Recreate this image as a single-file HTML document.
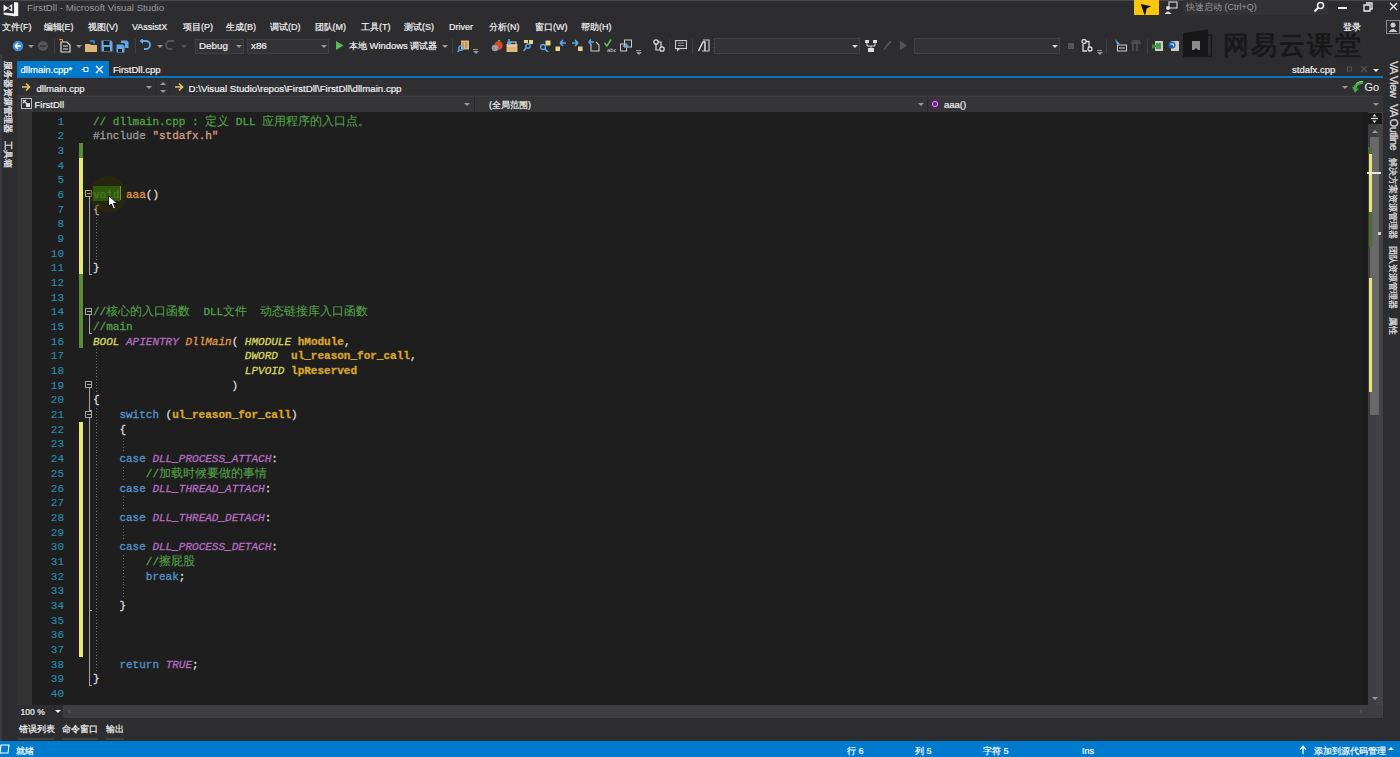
<!DOCTYPE html>
<html><head><meta charset="utf-8">
<style>
*{margin:0;padding:0;box-sizing:border-box}
html,body{width:1400px;height:757px;overflow:hidden;background:#2d2d30;font-family:"Liberation Sans",sans-serif;color:#f1f1f1}
.a{position:absolute;white-space:nowrap}
.mi{font-size:9px;line-height:12px;color:#f1f1f1;-webkit-text-stroke:0.2px currentColor}
.tab{font-size:9.5px;line-height:12px;color:#f1f1f1;-webkit-text-stroke:0.2px currentColor}
.nav{font-size:9.5px;line-height:12px;color:#f1f1f1;-webkit-text-stroke:0.2px currentColor}
.st{font-size:9px;line-height:12px;color:#fff;-webkit-text-stroke:0.2px currentColor}
.code{font-family:"Liberation Mono",monospace;font-size:11px;letter-spacing:0px;-webkit-text-stroke:0.3px currentColor;line-height:14.68px;color:#dcdcdc}
.ln{color:#2a8cab;-webkit-text-stroke:0.15px currentColor;text-align:right;width:40px;left:24px}
.cm{color:#53a047}
.pp{color:#9b9b9b}
.str{color:#d69d85}
.kw{color:#5592cc}
.ty{color:#d8d860;font-style:italic}
.mac{color:#b46cc0;font-style:italic}
.fn{color:#e0964a;font-style:italic}
.pa{color:#d9a530;font-weight:bold}
.fn2{color:#e39a3f}
.zh{font-size:11.6px;letter-spacing:0;-webkit-text-stroke:0.1px currentColor}
.cb{position:absolute;border:1px solid #3f3f46;background:#333337}
.dd{position:absolute;width:0;height:0;border-left:3px solid transparent;border-right:3px solid transparent;border-top:3px solid #999}
.vt{position:absolute;transform-origin:0 0;transform:rotate(90deg);white-space:nowrap;font-size:9px;line-height:10px;color:#d8d8d8;-webkit-text-stroke:0.3px currentColor}
.dg{position:absolute;width:1px;background:repeating-linear-gradient(to bottom,#6e6e6e 0,#6e6e6e 1px,transparent 1px,transparent 3px)}

</style></head><body>
<div class="a" style="left:0;top:0;width:1400px;height:1px;background:#48484c"></div>
<svg class="a" style="left:0;top:0" width="20" height="18" viewBox="0 0 20 18"><path d="M14 2 L18.2 2.6 V16 L14 16.2 Z" fill="#f4f4f4"/><path d="M3.6 12.4 L14.5 13.6 V16.2 L3.6 14.8 Z" fill="#f4f4f4"/><path d="M3.6 4.6 L7.6 7.4 L12.2 4 V11.8 L7.6 8.6 L3.6 11.4 Z" fill="#f4f4f4"/><circle cx="9.8" cy="7.9" r="1.3" fill="#2d2d30"/></svg>
<div class="a" style="left:27px;top:2.3px;font-size:9.7px;line-height:12px;color:#999">FirstDll - Microsoft Visual Studio</div>
<div class="a" style="left:1134px;top:0;width:25px;height:15px;background:#f9c60f"></div>
<svg class="a" style="left:1139px;top:1px" width="14" height="14" viewBox="0 0 12 12"><path d="M1.5 2.5 L10.5 4.5 L6.5 6.5 L5.5 11.5 L4.5 11.5 Z" fill="#111"/></svg>
<svg class="a" style="left:1164px;top:1px" width="14" height="13" viewBox="0 0 14 13"><rect x="5" y="1" width="8" height="6" fill="none" stroke="#ccc" stroke-width="1.2"/><circle cx="4" cy="7" r="2" fill="#ddd"/><path d="M0.5 13 Q4 8 7.5 13Z" fill="#ddd"/></svg>
<div class="a" style="left:1183px;top:0;width:145px;height:15px;background:#333337"></div>
<div class="a" style="left:1186px;top:1px;font-size:9px;line-height:12px;color:#999">快速启动 (Ctrl+Q)</div>
<svg class="a" style="left:1313px;top:1px" width="12" height="12" viewBox="0 0 12 12"><circle cx="7.5" cy="4.5" r="3" fill="none" stroke="#eee" stroke-width="1.5"/><path d="M5.5 6.5 L1.5 10.5" stroke="#eee" stroke-width="2"/></svg>
<div class="a" style="left:1338px;top:7px;width:9px;height:2px;background:#eee"></div>
<svg class="a" style="left:1363px;top:2px" width="10" height="10" viewBox="0 0 10 10"><path d="M3 1 H9 V7 H7 M1 3 H7 V9 H1 Z" fill="none" stroke="#eee" stroke-width="1.3"/></svg>
<svg class="a" style="left:1389px;top:2px" width="9" height="9" viewBox="0 0 9 9"><path d="M1 1 L8 8 M8 1 L1 8" stroke="#eee" stroke-width="1.4"/></svg>
<div class="a mi" style="left:2px;top:21px">文件(F)</div>
<div class="a mi" style="left:43.5px;top:21px">编辑(E)</div>
<div class="a mi" style="left:88px;top:21px">视图(V)</div>
<div class="a mi" style="left:132px;top:21px">VAssistX</div>
<div class="a mi" style="left:183px;top:21px">项目(P)</div>
<div class="a mi" style="left:226px;top:21px">生成(B)</div>
<div class="a mi" style="left:270px;top:21px">调试(D)</div>
<div class="a mi" style="left:314.5px;top:21px">团队(M)</div>
<div class="a mi" style="left:361px;top:21px">工具(T)</div>
<div class="a mi" style="left:404px;top:21px">测试(S)</div>
<div class="a mi" style="left:449px;top:21px">Driver</div>
<div class="a mi" style="left:489px;top:21px">分析(N)</div>
<div class="a mi" style="left:535px;top:21px">窗口(W)</div>
<div class="a mi" style="left:581px;top:21px">帮助(H)</div>
<div class="a mi" style="left:1343px;top:21px">登录</div>
<svg class="a" style="left:1386px;top:20px" width="14" height="14" viewBox="0 0 14 14"><rect x="0.5" y="0.5" width="13" height="13" fill="none" stroke="#888"/><circle cx="7" cy="5" r="2.5" fill="#ccc"/><path d="M2.5 12 Q7 6 11.5 12Z" fill="#ccc"/></svg>
<svg class="a" style="left:12px;top:40px" width="12" height="12" viewBox="0 0 12 12"><circle cx="6" cy="6" r="5.2" fill="#3c8fd6"/><path d="M3 6 L6 3 M3 6 L6 9 M3 6 H9" stroke="#fff" stroke-width="1.5"/></svg>
<div class="dd" style="left:28px;top:45px"></div>
<svg class="a" style="left:37px;top:40px" width="12" height="12" viewBox="0 0 12 12"><circle cx="6" cy="6" r="5" fill="#555"/><path d="M9 6 H3" stroke="#333" stroke-width="1.5"/></svg>
<div class="a" style="left:54px;top:39px;width:1px;height:14px;background:#3f3f46"></div>
<svg class="a" style="left:59px;top:39px" width="13" height="14" viewBox="0 0 13 14"><path d="M2 3 H8 L11 6 V13 H2 Z" fill="none" stroke="#ddd" stroke-width="1.2"/><path d="M4 7 H9 M4 10 H9" stroke="#ddd"/><path d="M0 1 L3 0 L4 3" stroke="#e8b640" fill="none"/></svg>
<div class="dd" style="left:76px;top:45px"></div>
<svg class="a" style="left:84px;top:40px" width="14" height="13" viewBox="0 0 14 13"><path d="M1 4 H6 L7 5 H13 V12 H1 Z" fill="#dcb67a"/><path d="M6 1 H10 V4" stroke="#3c8fd6" stroke-width="1.5" fill="none"/></svg>
<svg class="a" style="left:101px;top:40px" width="12" height="12" viewBox="0 0 12 12"><path d="M0.5 0.5 H10 L11.5 2 V11.5 H0.5 Z" fill="#62a8e8"/><rect x="2.5" y="1" width="6" height="4" fill="#1e1e1e"/><rect x="3" y="7" width="6" height="4" fill="#1e1e1e"/></svg>
<svg class="a" style="left:116px;top:40px" width="13" height="13" viewBox="0 0 13 13"><path d="M0.5 4.5 H7 L8.5 6 V12.5 H0.5 Z" fill="#62a8e8"/><path d="M5 0.5 H11 L12.5 2 V8 H9 V4 L8 3 H5 Z" fill="#62a8e8"/><rect x="2" y="9" width="4" height="3" fill="#1e1e1e"/></svg>
<div class="a" style="left:135px;top:39px;width:1px;height:14px;background:#3f3f46"></div>
<svg class="a" style="left:139px;top:39px" width="12" height="13" viewBox="0 0 12 13"><path d="M3 2 H7 A4 4 0 0 1 7 10 H5" fill="none" stroke="#62a8e8" stroke-width="1.8"/><path d="M0.5 2 L4 -1 V5 Z" fill="#62a8e8"/></svg>
<div class="dd" style="left:157px;top:45px"></div>
<svg class="a" style="left:165px;top:39px" width="12" height="13" viewBox="0 0 12 13"><path d="M9 2 H5 A4 4 0 0 0 5 10 H7" fill="none" stroke="#555" stroke-width="1.8"/></svg>
<div class="dd" style="left:181px;top:45px;border-top-color:#555"></div>
<div class="cb" style="left:195px;top:39px;width:49px;height:15px"></div>
<div class="a mi" style="left:199px;top:40px;font-size:9.8px">Debug</div>
<div class="dd" style="left:236px;top:45px"></div>
<div class="cb" style="left:247px;top:39px;width:82px;height:15px"></div>
<div class="a mi" style="left:251px;top:40px;font-size:9.8px">x86</div>
<div class="dd" style="left:321px;top:45px"></div>
<svg class="a" style="left:336px;top:41px" width="8" height="9" viewBox="0 0 8 9"><path d="M0 0 L7.5 4.5 L0 9 Z" fill="#5cb85c"/></svg>
<div class="a mi" style="left:349px;top:40px;font-size:9.4px">本地 Windows 调试器</div>
<div class="dd" style="left:442px;top:45px"></div>
<div class="a" style="left:452px;top:39px;width:1px;height:14px;background:#3f3f46"></div>
<svg class="a" style="left:457px;top:40px" width="13" height="13" viewBox="0 0 13 13"><rect x="4" y="0.5" width="8" height="9" fill="#dcb67a"/><path d="M6 2 V8 M9 2 V8" stroke="#a07840"/><circle cx="4" cy="8" r="2.3" fill="none" stroke="#62a8e8" stroke-width="1.3"/><path d="M2.5 9.5 L0.5 12" stroke="#62a8e8" stroke-width="1.5"/></svg>
<div class="a" style="left:473px;top:49px;width:5px;height:1px;background:#999"></div><div class="dd" style="left:472.5px;top:51px;border-left-width:3px;border-right-width:3px;border-top-width:3px"></div>
<svg class="a" style="left:491px;top:40px" width="12" height="12" viewBox="0 0 12 12"><circle cx="7.5" cy="5.5" r="4.2" fill="#e0442b"/><circle cx="4" cy="8" r="3.3" fill="#9a9a9a"/><path d="M7 1 L9 0" stroke="#5cb85c" stroke-width="1.5"/></svg>
<svg class="a" style="left:506px;top:39px" width="12" height="14" viewBox="0 0 12 14"><rect x="0.5" y="5" width="11" height="8" fill="#dcb67a"/><rect x="2" y="3" width="8" height="4" fill="none" stroke="#ddd"/><path d="M3 0 V5 L6 3" stroke="#62a8e8" stroke-width="1.5" fill="none"/></svg>
<svg class="a" style="left:523px;top:39px" width="12" height="13" viewBox="0 0 12 13"><rect x="6" y="1" width="4" height="4" fill="#e8d48a"/><rect x="1" y="1" width="4" height="3" fill="#e8d48a"/><circle cx="5" cy="7" r="2.2" fill="none" stroke="#62a8e8" stroke-width="1.3"/><path d="M3.5 8.5 L0.5 12" stroke="#62a8e8" stroke-width="1.5"/></svg>
<svg class="a" style="left:539px;top:40px" width="12" height="12" viewBox="0 0 12 12"><rect x="6.5" y="0.5" width="5" height="5" fill="#e8d48a"/><circle cx="4" cy="7" r="2.5" fill="none" stroke="#62a8e8" stroke-width="1.3"/><path d="M6 9 L9 12" stroke="#62a8e8" stroke-width="1.5"/></svg>
<svg class="a" style="left:555px;top:39px" width="12" height="13" viewBox="0 0 12 13"><rect x="0.5" y="7.5" width="4.5" height="4.5" fill="#e8d48a"/><path d="M11 4 H5 M5 4 L8 1 M5 4 L8 7" stroke="#62a8e8" stroke-width="1.6" fill="none"/></svg>
<svg class="a" style="left:571px;top:39px" width="12" height="13" viewBox="0 0 12 13"><rect x="7" y="7.5" width="4.5" height="4.5" fill="#e8d48a"/><path d="M1 4 H7 M7 4 L4 1 M7 4 L4 7" stroke="#62a8e8" stroke-width="1.6" fill="none"/></svg>
<svg class="a" style="left:588px;top:39px" width="12" height="13" viewBox="0 0 12 13"><path d="M3 5 V12 H11 V6 L8 3" fill="none" stroke="#ccc" stroke-width="1.1"/><path d="M1 3 H6 M3 0.5 L1 3 L3 5.5" stroke="#62a8e8" stroke-width="1.5" fill="none"/></svg>
<svg class="a" style="left:604px;top:39px" width="12" height="14" viewBox="0 0 12 14"><path d="M0.5 4 L3 7 L7 0.5" stroke="#5cb85c" stroke-width="1.6" fill="none"/><text x="3" y="13" font-size="6" fill="#ccc" font-family="Liberation Sans">abc</text></svg>
<svg class="a" style="left:620px;top:39px" width="12" height="13" viewBox="0 0 12 13"><rect x="0.5" y="5" width="6" height="7" fill="none" stroke="#ccc"/><rect x="4.5" y="1" width="7" height="7" fill="none" stroke="#ccc"/><path d="M3 7 H8 M6 5 L8 7 L6 9" stroke="#62a8e8" stroke-width="1.3" fill="none"/></svg>
<div class="a" style="left:636px;top:50px;width:5px;height:1px;background:#999"></div><div class="dd" style="left:635.5px;top:52px;border-left-width:3px;border-right-width:3px;border-top-width:3px"></div>
<svg class="a" style="left:653px;top:39px" width="12" height="13" viewBox="0 0 12 13"><circle cx="3" cy="3" r="2.2" fill="none" stroke="#ddd" stroke-width="1.3"/><circle cx="9" cy="10" r="2.2" fill="none" stroke="#ddd" stroke-width="1.3"/><path d="M5 3 H8 V8 M3 5 V11 H6" stroke="#ddd" stroke-width="1.2" fill="none"/></svg>
<div class="a" style="left:669px;top:39px;width:1px;height:14px;background:#3f3f46"></div>
<svg class="a" style="left:675px;top:40px" width="12" height="12" viewBox="0 0 12 12"><rect x="0.5" y="0.5" width="11" height="8" fill="none" stroke="#ccc" stroke-width="1.2"/><path d="M2 9 L2 11.5 L5 9" fill="#ccc"/><path d="M3 3 H9 M3 5.5 H9" stroke="#999"/></svg>
<div class="a" style="left:692px;top:39px;width:1px;height:14px;background:#3f3f46"></div>
<svg class="a" style="left:698px;top:39px" width="12" height="13" viewBox="0 0 12 13"><path d="M5 1 H11 V12 H4" fill="none" stroke="#ccc" stroke-width="1.2"/><path d="M0.5 12 L5 3 L7 3 L7 12" fill="none" stroke="#ddd" stroke-width="1.5"/></svg>
<div class="a" style="left:713px;top:39px;width:1px;height:1px;background:#46464a"></div><div class="a" style="left:715px;top:41px;width:1px;height:1px;background:#46464a"></div><div class="a" style="left:713px;top:43px;width:1px;height:1px;background:#46464a"></div><div class="a" style="left:715px;top:45px;width:1px;height:1px;background:#46464a"></div><div class="a" style="left:713px;top:47px;width:1px;height:1px;background:#46464a"></div><div class="a" style="left:715px;top:49px;width:1px;height:1px;background:#46464a"></div><div class="a" style="left:713px;top:51px;width:1px;height:1px;background:#46464a"></div><div class="a" style="left:715px;top:53px;width:1px;height:1px;background:#46464a"></div>
<div class="cb" style="left:714px;top:38px;width:146px;height:16px"></div>
<div class="dd" style="left:852px;top:45px;border-top-color:#ddd"></div>
<svg class="a" style="left:865px;top:39px" width="12" height="13" viewBox="0 0 12 13"><rect x="0" y="1" width="4" height="3" fill="#ddd"/><rect x="8" y="1" width="4" height="3" fill="#ddd"/><path d="M2 4 V7 H10 V4 M6 7 V9" stroke="#ddd" fill="none"/><rect x="3" y="9" width="6" height="4" fill="#ddd"/></svg>
<svg class="a" style="left:883px;top:40px" width="9" height="11" viewBox="0 0 9 11"><path d="M7 0.5 L8.5 2 L2 9 L0.5 10.5 L1 8 Z" fill="#555"/></svg>
<svg class="a" style="left:900px;top:41px" width="7" height="9" viewBox="0 0 7 9"><path d="M0 0 L7 4.5 L0 9 Z" fill="#555"/></svg>
<div class="cb" style="left:914px;top:38px;width:146px;height:16px"></div>
<div class="dd" style="left:1052px;top:45px;border-top-color:#ddd"></div>
<div class="a" style="left:1068px;top:43px;width:6px;height:6px;background:#555"></div>
<svg class="a" style="left:1081px;top:39px" width="12" height="13" viewBox="0 0 12 13"><circle cx="3" cy="2.5" r="2" fill="none" stroke="#ddd" stroke-width="1.3"/><circle cx="9" cy="10" r="2" fill="none" stroke="#ddd" stroke-width="1.3"/><path d="M5 2.5 H8 V8 M2 5 V12 H6" stroke="#ddd" stroke-width="1.3" fill="none"/></svg>
<div class="a" style="left:1097px;top:50px;width:5px;height:1px;background:#999"></div><div class="dd" style="left:1096.5px;top:52px;border-left-width:3px;border-right-width:3px;border-top-width:3px"></div>
<div class="a" style="left:1106px;top:39px;width:1px;height:14px;background:#3f3f46"></div>
<svg class="a" style="left:1114px;top:39px" width="13" height="13" viewBox="0 0 13 13"><path d="M1 0 L6 5 L3 5 Z" fill="#62a8e8"/><rect x="3.5" y="6" width="9" height="6" fill="none" stroke="#ccc"/><path d="M5 9 H11" stroke="#ccc"/></svg>
<svg class="a" style="left:1130px;top:40px" width="12" height="12" viewBox="0 0 12 12"><path d="M1 3 H11 M3 3 V11 M7 3 V11 M2 1 H10" stroke="#555" stroke-width="1.5" fill="none"/></svg>
<div class="a" style="left:1147px;top:39px;width:1px;height:14px;background:#3f3f46"></div>
<svg class="a" style="left:1152px;top:40px" width="12" height="12" viewBox="0 0 12 12"><rect x="3" y="1" width="8" height="10" fill="#ccc"/><path d="M0 4 L6 6 L0 9 Z" fill="#3a8a3a"/><rect x="4" y="3" width="5" height="6" fill="#4a9a4a"/></svg>
<svg class="a" style="left:1168px;top:40px" width="12" height="12" viewBox="0 0 12 12"><rect x="3" y="1" width="8" height="10" fill="#ccc"/><circle cx="4" cy="5" r="3.5" fill="#1c5fa8"/><path d="M2.5 4 H5.5 V6.5" stroke="#fff" fill="none"/></svg>
<svg class="a" style="left:1182px;top:29px" width="32" height="29" viewBox="0 0 32 29"><path d="M1 4 L26 0.5 V27.5 H1 Z" fill="#161616" opacity="0.92"/><path d="M26 6 H29.5 V27.5 H1" fill="none" stroke="#1a1a1a" stroke-width="1.4"/><rect x="10" y="12" width="8" height="9" fill="#8c8c8c"/><path d="M12 21 L14 19 L16 21 L14 25 Z" fill="#111"/></svg>
<div class="a" style="left:1223px;top:31px;font-size:25.5px;line-height:28px;color:#171717;opacity:0.92;letter-spacing:2px;-webkit-text-stroke:0.9px #171717">网易云课堂</div>
<div class="a" style="left:17px;top:61px;width:92px;height:16px;background:#007acc"></div>
<div class="a" style="left:17px;top:76px;width:1366px;height:2.5px;background:#0a74c4"></div>
<div class="a tab" style="left:20.5px;top:64px;color:#fff">dllmain.cpp*</div>
<svg class="a" style="left:81px;top:65px" width="9" height="9" viewBox="0 0 9 9"><path d="M0.5 4.5 H3 M3 2 V7 M3 2.5 H7 V6.5 H3" stroke="#fff" fill="none"/></svg>
<svg class="a" style="left:95px;top:65px" width="9" height="9" viewBox="0 0 9 9"><path d="M1 1 L8 8 M8 1 L1 8" stroke="#fff" stroke-width="1.3"/></svg>
<div class="a tab" style="left:113px;top:64px">FirstDll.cpp</div>
<div class="a tab" style="left:1292px;top:64px">stdafx.cpp</div>
<svg class="a" style="left:1345px;top:65px" width="8" height="8" viewBox="0 0 8 8"><path d="M0.5 4 H2.5 M2.5 1.5 V6.5 M2.5 2 H6.5 V6 H2.5" stroke="#555" fill="none"/></svg>
<svg class="a" style="left:1360px;top:65px" width="8" height="8" viewBox="0 0 8 8"><path d="M1 1 L7 7 M7 1 L1 7" stroke="#555" stroke-width="1.2"/></svg>
<div class="dd" style="left:1373px;top:69px;border-top-color:#eee"></div>
<div class="a" style="left:17px;top:78px;width:1366px;height:17px;background:#2d2d30"></div>
<div class="cb" style="left:17px;top:79px;width:138px;height:16px;border-color:#303033;background:#303033"></div>
<svg class="a" style="left:21px;top:82px" width="10" height="10" viewBox="0 0 10 10"><path d="M1 5 H8 M5 1.5 L8.5 5 L5 8.5" stroke="#e8c068" stroke-width="1.7" fill="none"/></svg>
<div class="a nav" style="left:36.5px;top:82.5px">dllmain.cpp</div>
<div class="dd" style="left:146px;top:86px;border-top-color:#999"></div>
<div class="cb" style="left:157px;top:79px;width:11px;height:16px;border-color:#303033;background:#303033"></div>
<div class="dd" style="left:159.5px;top:82px;border-top:none;border-bottom:3px solid #999"></div><div class="dd" style="left:159.5px;top:90px"></div>
<div class="cb" style="left:170px;top:79px;width:1213px;height:16px;border-color:#303033;background:#303033"></div>
<svg class="a" style="left:174px;top:82px" width="10" height="10" viewBox="0 0 10 10"><path d="M1 5 H8 M5 1.5 L8.5 5 L5 8.5" stroke="#e8c068" stroke-width="1.7" fill="none"/></svg>
<div class="a nav" style="left:188.5px;top:82.5px;font-size:9.7px">D:\Visual Studio\repos\FirstDll\FirstDll\dllmain.cpp</div>
<div class="dd" style="left:1342px;top:86px;border-top-color:#999"></div>
<svg class="a" style="left:1352px;top:80px" width="12" height="14" viewBox="0 0 12 14"><path d="M11 1 Q3 1 2 8 L0 6 L3 13 L7 8 L4.5 9 Q5 4 11 4 Z" fill="#3cb043"/><path d="M11 1 Q3 1 2 8 L1.5 7.5 Q3 2 11 2Z" fill="#a0e080"/></svg>
<div class="a" style="left:1364.5px;top:80px;font-size:11px;line-height:14px;color:#f1f1f1">Go</div>
<div class="a" style="left:17px;top:95px;width:1366px;height:17px;background:#353538"></div>
<div class="a" style="left:17px;top:96px;width:1366px;height:1px;background:#3c3c3f"></div>
<svg class="a" style="left:21px;top:98px" width="11" height="11" viewBox="0 0 11 11"><rect x="0.5" y="0.5" width="10" height="10" fill="#2d2d30" stroke="#bbb"/><path d="M2 2 L6 6 M2 5 L5 2" stroke="#ddd" stroke-width="1.3"/><rect x="5" y="5" width="4" height="4" fill="#ddd"/></svg>
<div class="a nav" style="left:34.5px;top:99px">FirstDll</div>
<div class="dd" style="left:464px;top:103px;border-top-color:#999"></div>
<div class="a" style="left:474px;top:96px;width:1px;height:16px;background:#2a2a2d"></div>
<div class="a nav" style="left:489px;top:99px;font-size:9px">(全局范围)</div>
<div class="dd" style="left:918px;top:103px;border-top-color:#999"></div>
<div class="a" style="left:927px;top:96px;width:1px;height:16px;background:#2a2a2d"></div>
<svg class="a" style="left:930px;top:99px" width="10" height="10" viewBox="0 0 10 10"><circle cx="5" cy="5" r="4.5" fill="#68217a"/><circle cx="5" cy="5" r="2.5" fill="none" stroke="#c9a8e0" stroke-width="1"/></svg>
<div class="a nav" style="left:944px;top:99px">aaa()</div>
<div class="dd" style="left:1373px;top:103px;border-top-color:#999"></div>
<div class="a" style="left:0;top:55px;width:2px;height:686px;background:#3a3a3e"></div>
<div class="vt" style="left:13px;top:61px;font-size:8.8px;-webkit-text-stroke:0.45px #d8d8d8">服务器资源管理器</div>
<div class="vt" style="left:13px;top:141px;font-size:8.8px;-webkit-text-stroke:0.45px #d8d8d8">工具箱</div>
<div class="a" style="left:17px;top:112px;width:15px;height:593px;background:#333333"></div>
<div class="a" style="left:32px;top:112px;width:1336px;height:593px;background:#1e1e1e"></div>
<div class="a code ln" style="top:114.50px">1</div>
<div class="a code ln" style="top:129.18px">2</div>
<div class="a code ln" style="top:143.86px">3</div>
<div class="a code ln" style="top:158.54px">4</div>
<div class="a code ln" style="top:173.22px">5</div>
<div class="a code ln" style="top:187.90px">6</div>
<div class="a code ln" style="top:202.58px">7</div>
<div class="a code ln" style="top:217.26px">8</div>
<div class="a code ln" style="top:231.94px">9</div>
<div class="a code ln" style="top:246.62px">10</div>
<div class="a code ln" style="top:261.30px">11</div>
<div class="a code ln" style="top:275.98px">12</div>
<div class="a code ln" style="top:290.66px">13</div>
<div class="a code ln" style="top:305.34px">14</div>
<div class="a code ln" style="top:320.02px">15</div>
<div class="a code ln" style="top:334.70px">16</div>
<div class="a code ln" style="top:349.38px">17</div>
<div class="a code ln" style="top:364.06px">18</div>
<div class="a code ln" style="top:378.74px">19</div>
<div class="a code ln" style="top:393.42px">20</div>
<div class="a code ln" style="top:408.10px">21</div>
<div class="a code ln" style="top:422.78px">22</div>
<div class="a code ln" style="top:437.46px">23</div>
<div class="a code ln" style="top:452.14px">24</div>
<div class="a code ln" style="top:466.82px">25</div>
<div class="a code ln" style="top:481.50px">26</div>
<div class="a code ln" style="top:496.18px">27</div>
<div class="a code ln" style="top:510.86px">28</div>
<div class="a code ln" style="top:525.54px">29</div>
<div class="a code ln" style="top:540.22px">30</div>
<div class="a code ln" style="top:554.90px">31</div>
<div class="a code ln" style="top:569.58px">32</div>
<div class="a code ln" style="top:584.26px">33</div>
<div class="a code ln" style="top:598.94px">34</div>
<div class="a code ln" style="top:613.62px">35</div>
<div class="a code ln" style="top:628.30px">36</div>
<div class="a code ln" style="top:642.98px">37</div>
<div class="a code ln" style="top:657.66px">38</div>
<div class="a code ln" style="top:672.34px">39</div>
<div class="a code ln" style="top:687.02px">40</div>
<div class="a" style="left:79.3px;top:143.0px;width:4.2px;height:14.5px;background:#5d8a34"></div>
<div class="a" style="left:79.3px;top:157.5px;width:4.2px;height:116.5px;background:#e6e67a"></div>
<div class="a" style="left:79.3px;top:274.0px;width:4.2px;height:73.5px;background:#5d8a34"></div>
<div class="a" style="left:79.3px;top:421.5px;width:4.2px;height:235.5px;background:#e6e67a"></div>
<div class="a" style="left:85px;top:190.3px;width:7px;height:7px;border:1px solid #b8a878;background:#1e1e1e"></div>
<div class="a" style="left:86.5px;top:193.3px;width:4px;height:1px;background:#b8a878"></div>
<div class="a" style="left:88.5px;top:197.4px;width:1px;height:77.4px;background:#a5a5a5"></div>
<div class="a" style="left:88.5px;top:273.8px;width:3px;height:1px;background:#a5a5a5"></div>
<div class="a" style="left:85px;top:307.7px;width:7px;height:7px;border:1px solid #a5a5a5;background:#1e1e1e"></div>
<div class="a" style="left:86.5px;top:310.7px;width:4px;height:1px;background:#a5a5a5"></div>
<div class="a" style="left:88.5px;top:314.8px;width:1px;height:18.7px;background:#a5a5a5"></div>
<div class="a" style="left:88.5px;top:332.5px;width:3px;height:1px;background:#a5a5a5"></div>
<div class="a" style="left:85px;top:381.1px;width:7px;height:7px;border:1px solid #a5a5a5;background:#1e1e1e"></div>
<div class="a" style="left:86.5px;top:384.1px;width:4px;height:1px;background:#a5a5a5"></div>
<div class="a" style="left:88.5px;top:388.2px;width:1px;height:22.3px;background:#a5a5a5"></div>
<div class="a" style="left:88.5px;top:409.5px;width:3px;height:1px;background:#a5a5a5"></div>
<div class="a" style="left:85px;top:410.5px;width:7px;height:7px;border:1px solid #a5a5a5;background:#1e1e1e"></div>
<div class="a" style="left:86.5px;top:413.5px;width:4px;height:1px;background:#a5a5a5"></div>
<div class="a" style="left:88.5px;top:417.6px;width:1px;height:268.2px;background:#a5a5a5"></div>
<div class="a" style="left:88.5px;top:684.8px;width:3px;height:1px;background:#a5a5a5"></div>
<div class="a" style="left:88.5px;top:609.9px;width:3px;height:1px;background:#a5a5a5"></div>
<div class="a dg" style="left:96px;top:217.3px;height:14.68px"></div>
<div class="a dg" style="left:96px;top:231.9px;height:14.68px"></div>
<div class="a dg" style="left:96px;top:246.6px;height:14.68px"></div>
<div class="a dg" style="left:96px;top:349.4px;height:14.68px"></div>
<div class="a dg" style="left:96px;top:364.1px;height:14.68px"></div>
<div class="a dg" style="left:96px;top:378.7px;height:14.68px"></div>
<div class="a dg" style="left:96px;top:408.1px;height:14.68px"></div>
<div class="a dg" style="left:96px;top:422.8px;height:14.68px"></div>
<div class="a dg" style="left:96px;top:437.5px;height:14.68px"></div>
<div class="a dg" style="left:96px;top:452.1px;height:14.68px"></div>
<div class="a dg" style="left:96px;top:466.8px;height:14.68px"></div>
<div class="a dg" style="left:96px;top:481.5px;height:14.68px"></div>
<div class="a dg" style="left:96px;top:496.2px;height:14.68px"></div>
<div class="a dg" style="left:96px;top:510.9px;height:14.68px"></div>
<div class="a dg" style="left:96px;top:525.5px;height:14.68px"></div>
<div class="a dg" style="left:96px;top:540.2px;height:14.68px"></div>
<div class="a dg" style="left:96px;top:554.9px;height:14.68px"></div>
<div class="a dg" style="left:96px;top:569.6px;height:14.68px"></div>
<div class="a dg" style="left:96px;top:584.3px;height:14.68px"></div>
<div class="a dg" style="left:96px;top:598.9px;height:14.68px"></div>
<div class="a dg" style="left:96px;top:613.6px;height:14.68px"></div>
<div class="a dg" style="left:96px;top:628.3px;height:14.68px"></div>
<div class="a dg" style="left:96px;top:643.0px;height:14.68px"></div>
<div class="a dg" style="left:96px;top:657.7px;height:14.68px"></div>
<div class="a dg" style="left:122.5px;top:437.5px;height:14.68px"></div>
<div class="a dg" style="left:122.5px;top:466.8px;height:14.68px"></div>
<div class="a dg" style="left:122.5px;top:496.2px;height:14.68px"></div>
<div class="a dg" style="left:122.5px;top:525.5px;height:14.68px"></div>
<div class="a dg" style="left:122.5px;top:554.9px;height:14.68px"></div>
<div class="a dg" style="left:122.5px;top:569.6px;height:14.68px"></div>
<div class="a dg" style="left:122.5px;top:584.3px;height:14.68px"></div>
<div class="a" style="left:93px;top:185.5px;width:27px;height:15.5px;background:#2d7a1c"></div>
<div class="a" style="left:119.5px;top:186px;width:1.5px;height:14px;background:#b8d8a0"></div>
<div class="a code" style="left:93px;top:114.50px;white-space:pre"><span class="cm">// dllmain.cpp : <span class="zh">定义</span> DLL <span class="zh">应用程序的入口点。</span></span></div>
<div class="a code" style="left:93px;top:129.18px;white-space:pre"><span class="pp">#include</span> <span class="str">"stdafx.h"</span></div>
<div class="a code" style="left:93px;top:187.90px;white-space:pre"><span style="color:#5cb842">void</span> <span class="fn2">aaa</span>()</div>
<div class="a code" style="left:93px;top:202.58px;white-space:pre"><span style="color:#c0b080">{</span></div>
<div class="a code" style="left:93px;top:261.30px;white-space:pre">}</div>
<div class="a code" style="left:93px;top:305.34px;white-space:pre"><span class="cm">//<span class="zh">核心的入口函数</span>  DLL<span class="zh">文件</span>  <span class="zh">动态链接库入口函数</span></span></div>
<div class="a code" style="left:93px;top:320.02px;white-space:pre"><span class="cm">//main</span></div>
<div class="a code" style="left:93px;top:334.70px;white-space:pre"><span class="ty">BOOL</span> <span class="mac">APIENTRY</span> <span class="fn">DllMain</span>( <span class="ty">HMODULE</span> <span class="pa">hModule</span>,</div>
<div class="a code" style="left:93px;top:349.38px;white-space:pre">                       <span class="ty">DWORD</span>  <span class="pa">ul_reason_for_call</span>,</div>
<div class="a code" style="left:93px;top:364.06px;white-space:pre">                       <span class="ty">LPVOID</span> <span class="pa">lpReserved</span></div>
<div class="a code" style="left:93px;top:378.74px;white-space:pre">                     )</div>
<div class="a code" style="left:93px;top:393.42px;white-space:pre">{</div>
<div class="a code" style="left:93px;top:408.10px;white-space:pre">    <span class="kw">switch</span> (<span class="pa">ul_reason_for_call</span>)</div>
<div class="a code" style="left:93px;top:422.78px;white-space:pre">    {</div>
<div class="a code" style="left:93px;top:452.14px;white-space:pre">    <span class="kw">case</span> <span class="mac">DLL_PROCESS_ATTACH</span>:</div>
<div class="a code" style="left:93px;top:466.82px;white-space:pre">        <span class="cm">//<span class="zh">加载时候要做的事情</span></span></div>
<div class="a code" style="left:93px;top:481.50px;white-space:pre">    <span class="kw">case</span> <span class="mac">DLL_THREAD_ATTACH</span>:</div>
<div class="a code" style="left:93px;top:510.86px;white-space:pre">    <span class="kw">case</span> <span class="mac">DLL_THREAD_DETACH</span>:</div>
<div class="a code" style="left:93px;top:540.22px;white-space:pre">    <span class="kw">case</span> <span class="mac">DLL_PROCESS_DETACH</span>:</div>
<div class="a code" style="left:93px;top:554.90px;white-space:pre">        <span class="cm">//<span class="zh">擦屁股</span></span></div>
<div class="a code" style="left:93px;top:569.58px;white-space:pre">        <span class="kw">break</span>;</div>
<div class="a code" style="left:93px;top:598.94px;white-space:pre">    }</div>
<div class="a code" style="left:93px;top:657.66px;white-space:pre">    <span class="kw">return</span> <span class="mac">TRUE</span>;</div>
<div class="a code" style="left:93px;top:672.34px;white-space:pre">}</div>
<div class="a" style="left:89.8px;top:175.5px;width:37px;height:37px;border-radius:50%;background:rgba(52,46,0,0.45)"></div>
<svg class="a" style="left:107.5px;top:194.5px" width="11" height="15.4" viewBox="0 0 10 14"><path d="M0.5 0.5 L0.5 10.5 L3 8.3 L5 12.8 L6.8 12 L4.9 7.6 L8.3 7.6 Z" fill="#fff" stroke="#000" stroke-width="0.8"/></svg>
<div class="a" style="left:1362px;top:112px;width:6px;height:593px;background:#1c1c1c"></div>
<div class="a" style="left:1368px;top:112px;width:15px;height:606px;background:#3e3e42"></div>
<div class="a" style="left:1376px;top:112px;width:7px;height:606px;background:#434346"></div>
<div class="a" style="left:1368px;top:113px;width:14px;height:11px;background:#1a1a1a"></div>
<svg class="a" style="left:1370px;top:113px" width="9" height="11" viewBox="0 0 9 11"><path d="M1 5.5 H8" stroke="#ddd" stroke-width="1.3"/><path d="M2.5 3.5 L4.5 1 L6.5 3.5 Z M2.5 7.5 L4.5 10 L6.5 7.5Z" fill="#ddd"/></svg>
<div class="dd" style="left:1372px;top:130px;border-top:none;border-bottom:3px solid #999"></div>
<div class="a" style="left:1370px;top:137px;width:9px;height:278px;background:#686868"></div>
<div class="a" style="left:1368px;top:147px;width:4px;height:7px;background:#56643c"></div>
<div class="a" style="left:1368.5px;top:154px;width:3.5px;height:58px;background:#e6e67a"></div>
<div class="a" style="left:1368.5px;top:212px;width:3.5px;height:35px;background:#4e6a32"></div>
<div class="a" style="left:1368.5px;top:278px;width:3.5px;height:114px;background:#e6e67a"></div>
<div class="a" style="left:1367px;top:172px;width:14px;height:1.5px;background:#e8e8e8"></div>
<div class="a" style="left:1378px;top:232px;width:3px;height:3px;background:#ccc"></div>
<div class="dd" style="left:1372px;top:697px;border-top-color:#999"></div>
<div class="vt" style="left:1399px;top:61px;font-size:11px;letter-spacing:-0.55px;line-height:11px">VA View</div>
<div class="vt" style="left:1399px;top:104px;font-size:11px;letter-spacing:-0.5px;line-height:11px">VA Outline</div>
<div class="vt" style="left:1397.5px;top:158px;font-size:9px">解决方案资源管理器</div>
<div class="vt" style="left:1397.5px;top:245.5px;font-size:8.9px">团队资源管理器</div>
<div class="vt" style="left:1397.5px;top:316.5px;font-size:8.9px">属性</div>
<div class="a" style="left:17px;top:705px;width:1365px;height:13px;background:#3e3e42"></div>
<div class="a" style="left:17px;top:705px;width:46px;height:13px;background:#2d2d30"></div>
<div class="a nav" style="left:20.5px;top:706px;font-size:8.6px">100 %</div>
<div class="dd" style="left:55px;top:710px;border-top-color:#eee"></div>
<div class="a" style="left:68px;top:707px;font-size:9px;line-height:9px;color:#666">‹</div>
<div class="a" style="left:1359px;top:707px;font-size:9px;line-height:9px;color:#666">›</div>
<div class="a nav" style="left:18.5px;top:723px;font-size:8.75px">错误列表</div>
<div class="a nav" style="left:62px;top:723px;font-size:8.75px">命令窗口</div>
<div class="a nav" style="left:106px;top:723px;font-size:8.75px">输出</div>
<div class="a" style="left:18px;top:738px;width:36px;height:2px;background:#3f3f46"></div>
<div class="a" style="left:62px;top:738px;width:36px;height:2px;background:#3f3f46"></div>
<div class="a" style="left:106px;top:738px;width:18px;height:2px;background:#3f3f46"></div>
<div class="a" style="left:0;top:741px;width:1400px;height:16px;background:#007acc"></div>
<svg class="a" style="left:0px;top:744px" width="10" height="10" viewBox="0 0 10 10"><path d="M1 1 H9 L8 9 H0 Z" fill="none" stroke="#fff" stroke-width="1.1"/></svg>
<div class="a st" style="left:15.5px;top:744.7px">就绪</div>
<div class="a st" style="left:847px;top:744.7px">行 6</div>
<div class="a st" style="left:915px;top:744.7px">列 5</div>
<div class="a st" style="left:983px;top:744.7px">字符 5</div>
<div class="a st" style="left:1082px;top:744.7px">Ins</div>
<svg class="a" style="left:1299px;top:745px" width="8" height="9" viewBox="0 0 8 9"><path d="M4 9 V1.5 M1 4.5 L4 1.2 L7 4.5" stroke="#fff" stroke-width="1.3" fill="none"/></svg>
<div class="a st" style="left:1314px;top:744.7px">添加到源代码管理</div>
<div class="dd" style="left:1388px;top:747px;border-top:none;border-bottom:3px solid #fff"></div>
</body></html>
